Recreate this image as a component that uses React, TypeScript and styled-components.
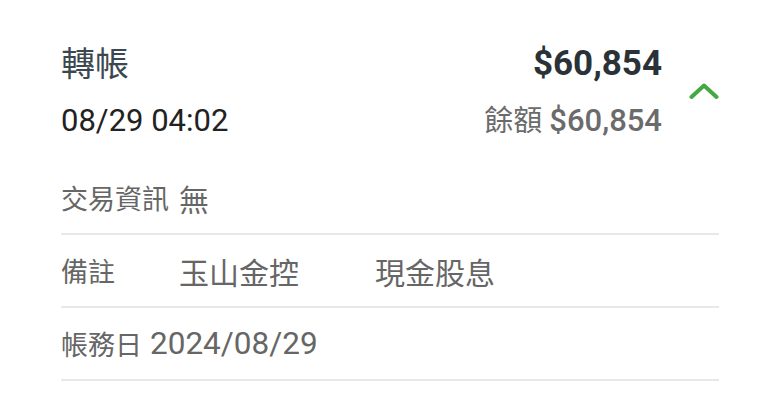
import React from 'react';
import styled, { createGlobalStyle } from 'styled-components';

const GlobalStyle = createGlobalStyle`
  html, body {
    margin: 0;
    padding: 0;
    background: #ffffff;
  }
  body {
    font-family: Roboto, "Noto Sans CJK TC", sans-serif;
  }
`;

const Page = styled.div`
  width: 780px;
  height: 414px;
  padding: 41px 61px 0 61px;
  box-sizing: border-box;
  background: #fff;
`;

const Header = styled.div`
  display: flex;
  align-items: center;
  padding-bottom: 21px;
`;

const HeaderMain = styled.div`
  flex: 1;
  display: grid;
  grid-template-columns: 1fr auto;
  row-gap: 14px;
  align-items: center;
`;

const Title = styled.div`
  font-size: 34px;
  line-height: 46px;
  color: #3c4850;
`;

const Amount = styled.div`
  font-size: 35px;
  font-weight: 700;
  line-height: 46px;
  color: #2a3238;
  text-align: right;
`;

const DateText = styled.div`
  font-size: 31px;
  line-height: 40px;
  color: #222;
`;

const Balance = styled.div`
  font-size: 29px;
  line-height: 40px;
  color: #6b6b6b;
  text-align: right;

  b {
    font-weight: 500;
    font-size: 31px;
    margin-left: 7px;
  }
`;

const Toggle = styled.div`
  width: 57px;
  display: flex;
  justify-content: flex-end;
  align-items: center;
`;

const Row = styled.div`
  display: flex;
  align-items: center;
  height: 71px;
  border-bottom: 2px solid #e8e8e8;
  color: #6b6b6b;
`;

const Label = styled.span`
  font-size: 27px;
  color: #666;
`;

const Value = styled.span<{ $offset?: number; $size?: number }>`
  font-size: ${p => p.$size ?? 30}px;
  color: #666;
  margin-left: ${p => p.$offset ?? 8}px;
`;

const App = () => (
  <>
    <GlobalStyle />
    <Page>
      <Header>
        <HeaderMain>
          <Title>轉帳</Title>
          <Amount>$60,854</Amount>
          <DateText>08/29 04:02</DateText>
          <Balance>
            餘額<b>$60,854</b>
          </Balance>
        </HeaderMain>
        <Toggle>
          <svg width="30" height="18" viewBox="0 0 30 18">
            <path
              d="M2.5 15 L15 3.5 L27.5 15"
              fill="none"
              stroke="#45a843"
              strokeWidth="4"
              strokeLinecap="round"
              strokeLinejoin="round"
            />
          </svg>
        </Toggle>
      </Header>
      <Row>
        <Label>交易資訊</Label>
        <Value $offset={10}>無</Value>
      </Row>
      <Row>
        <Label>備註</Label>
        <Value $offset={64}>玉山金控</Value>
        <Value $offset={76}>現金股息</Value>
      </Row>
      <Row>
        <Label>帳務日</Label>
        <Value $offset={8} $size={31.5}>2024/08/29</Value>
      </Row>
    </Page>
  </>
);

export default App;
